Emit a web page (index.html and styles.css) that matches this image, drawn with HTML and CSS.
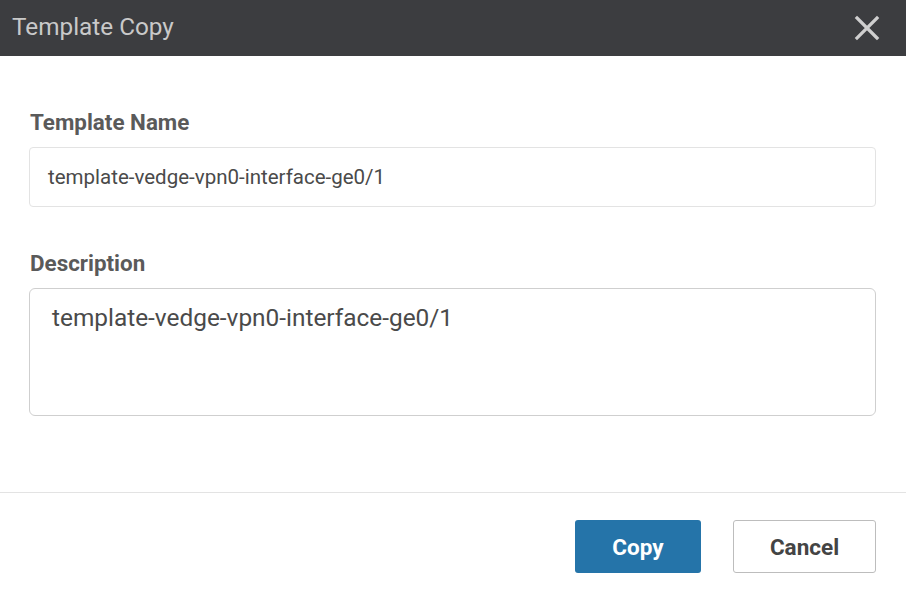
FILE: index.html
```html
<!DOCTYPE html>
<html>
<head>
<meta charset="utf-8">
<link rel="stylesheet" href="styles.css">
</head>
<body>
<div class="dialog">
  <div class="header">
    <div class="title">Template Copy</div>
    <button class="close" aria-label="Close">
      <svg width="26" height="26" viewBox="0 0 26 26"><path d="M3 3 L23 23 M23 3 L3 23" stroke="#cfcfcf" stroke-width="3.2" stroke-linecap="square"/></svg>
    </button>
  </div>
  <div class="body">
    <div class="field">
      <label class="label">Template Name</label>
      <div class="input">template-vedge-vpn0-interface-ge0/1</div>
    </div>
    <div class="field">
      <label class="label">Description</label>
      <div class="textarea">template-vedge-vpn0-interface-ge0/1</div>
    </div>
  </div>
  <div class="footer">
    <button class="btn primary">Copy</button>
    <button class="btn secondary">Cancel</button>
  </div>
</div>
</body>
</html>
```
FILE: styles.css
```css
* { box-sizing: border-box; }
html, body { margin: 0; padding: 0; background: #fff; }
body { font-family: Roboto, "Liberation Sans", sans-serif; width: 906px; height: 592px; overflow: hidden; }
.dialog { display: flex; flex-direction: column; height: 592px; }
.header {
  height: 56px; background: #3c3d40; display: flex; align-items: center;
  justify-content: space-between; padding: 0 26px 0 12px;
}
.title { color: #c9c9c9; font-size: 24.3px; line-height: 1; padding-bottom: 2px; }
.close { background: none; border: none; padding: 0; display: flex; cursor: pointer; }
.body { padding: 54px 30px 0 29px; display: flex; flex-direction: column; gap: 44px; height: 436px; }
.field { display: flex; flex-direction: column; }
.label { font-size: 22.4px; font-weight: 700; color: #5a5a5a; line-height: 24px; margin-left: 1px; margin-bottom: 13px; }
.input {
  height: 60px; border: 1px solid #e3e3e3; border-radius: 4px;
  font-size: 20.5px; color: #4a4a4a; padding: 0 18px; display: flex; align-items: center;
}
.textarea {
  height: 128px; border: 1px solid #cfcfcf; border-radius: 6px;
  font-size: 24.4px; color: #4a4a4a; padding: 14px 22px;
}
.footer {
  border-top: 1px solid #e3e3e3; display: flex; justify-content: flex-end;
  gap: 32px; padding: 27px 30px 0 0; flex: 1;
}
.btn {
  height: 53px; font-family: inherit; font-size: 22.5px; font-weight: 700; border-radius: 3px; cursor: pointer;
}
.primary { width: 126px; background: #2574a9; color: #fff; border: none; }
.secondary { width: 143px; background: #fff; color: #444; border: 1px solid #bdbdbd; }
```
